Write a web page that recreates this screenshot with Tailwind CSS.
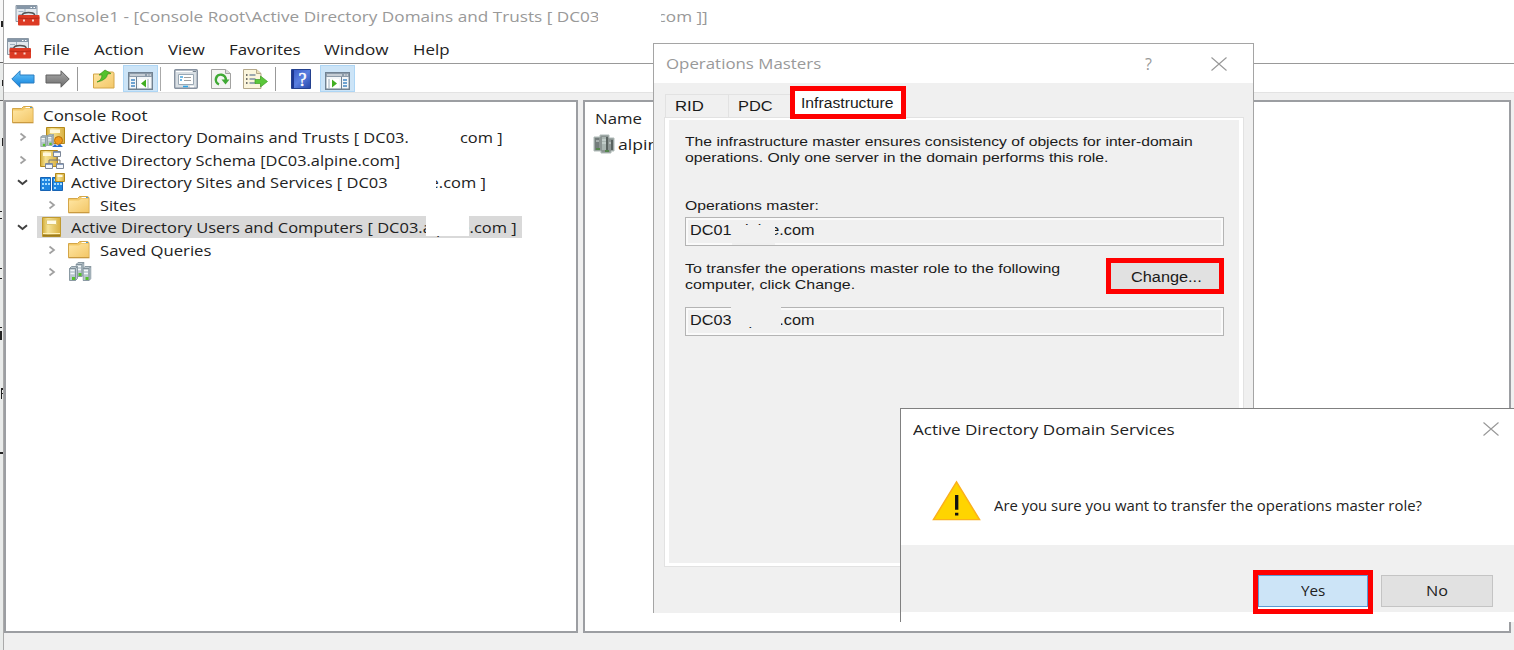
<!DOCTYPE html>
<html lang="en">
<head>
    <meta charset="UTF-8"/>
    <meta content="width=device-width, initial-scale=1.0" name="viewport"/>
    <script src="https://cdn.jsdelivr.net/npm/@tailwindcss/browser@4"></script>
    <title>Console1</title>
</head>
<body class="bg-[#f0f0f0] overflow-hidden">
<!-- shared icons -->
<svg class="absolute w-0 h-0">
    <defs>
        <linearGradient id="gold" x1="0" y1="0" x2="1" y2="1"><stop offset="0" stop-color="#ffe6a3"/><stop offset="1" stop-color="#f3c768"/></linearGradient>
        <linearGradient id="book" x1="0" y1="0" x2="1" y2="0"><stop offset="0" stop-color="#d3ad3a"/><stop offset=".3" stop-color="#f5e295"/><stop offset="1" stop-color="#d9b040"/></linearGradient>
        <linearGradient id="blue" x1="0" y1="0" x2="0" y2="1"><stop offset="0" stop-color="#6cc8fb"/><stop offset="1" stop-color="#0c7fdc"/></linearGradient>
        <linearGradient id="gray" x1="0" y1="0" x2="0" y2="1"><stop offset="0" stop-color="#aaa"/><stop offset="1" stop-color="#6c6c6c"/></linearGradient>
        <linearGradient id="help" x1="0" y1="0" x2="1" y2="1"><stop offset="0" stop-color="#3558c4"/><stop offset=".5" stop-color="#5a7fe0"/><stop offset="1" stop-color="#2444a8"/></linearGradient>
        <symbol id="mmc" viewBox="0 0 24 21">
            <path d="M.5.5h21v16H.5z" fill="#e3e9ee" stroke="#8b98a5"/>
            <path d="M1 1h20v3H1z" fill="#8697a8"/>
            <path d="M15 2.5h1.500M18 2.500h1.500" stroke="#fff"/>
            <path d="M3 6.500h5M3 9.500h4M3 12.500h2M9.500 4v5" stroke="#9fb0c0"/>
            <path d="M7 10.500V9.500Q8 7.500 13 7.500T19 9.500V10.500" fill="none" stroke="#555" stroke-width="1.600"/>
            <rect x="2.500" y="10" width="21.500" height="10.500" rx="1" fill="#dc3a24"/>
            <path d="M2.500 13q10.500 1.500 21.500 0" stroke="#b92a18" fill="none"/>
            <path d="M7.500 14.500h2v2h-2zM16.500 14.500h2v2h-2z" fill="#f8d8d0"/>
        </symbol>
        <symbol id="folder" viewBox="0 0 22 18">
            <path d="M.5 16.500V2.500h9l2-2h7.500q2 0 2 2v14z" fill="#f3c968" stroke="#d4a648"/>
            <path d="M1 4.500h10l2-1.500h7.500v13H1z" fill="url(#gold)"/>
            <path d="M13.500 1.500h5" stroke="#fff"/><path d="M18 1.500h2" stroke="#4b9be0"/>
            <path d="M.5 16.800h21" stroke="#c6963e"/>
        </symbol>
        <symbol id="aduc" viewBox="0 0 19 20">
            <path d="M.5.500h18v19H.5z" fill="url(#book)" stroke="#c09a30"/>
            <path d="M4.500 3h10v4.500h-10z" fill="#fffbe8" stroke="#e0c870"/>
            <path d="M1 16.500h17" stroke="#fff0b4"/><path d="M1 18.500h17" stroke="#9d7b1c" stroke-width="2"/>
        </symbol>
        <symbol id="server" viewBox="0 0 9 15">
            <path d="M.5 2.500l2-2h6v12l-2 2h-6z" fill="#b9c6cd" stroke="#8b9aa3"/>
            <path d="M.5 2.500h6v12M6.500 2.500l2-2" fill="none" stroke="#80909a"/>
            <path d="M1.500 4.500h4M1.500 7.500h4" stroke="#f4f8fa" stroke-width="1.500"/>
            <path d="M3 11h3v3H3z" fill="#55c22b"/>
        </symbol>
        <symbol id="domain" viewBox="0 0 24 20">
            <use href="#server" x="7.500" y="0" width="9" height="15"/>
            <use href="#server" x="1" y="4" width="9" height="15"/>
            <use href="#server" x="14.500" y="4" width="9" height="15"/>
        </symbol>
        <symbol id="more" viewBox="0 0 8 10"><path d="M1.500 1.500L6 5 1.500 8.500" fill="none" stroke="#a0a0a0" stroke-width="1.700"/></symbol>
        <symbol id="open" viewBox="0 0 11 7"><path d="M1 1.200L5.500 5 10 1.200" fill="none" stroke="#404040" stroke-width="2"/></symbol>
        <symbol id="close" viewBox="0 0 16 14"><path d="M.5.500l15 13M15.500.500l-15 13" fill="none" stroke="#989898" stroke-width="1.100"/></symbol>
    </defs>
</svg>

<div class="relative flex w-[1514px] h-[650px] overflow-hidden font-['Open_Sans','Noto_Sans',sans-serif] text-[15px] text-[#222] whitespace-nowrap [&_span]:shrink-0 [&_span]:origin-left">
    <!-- edge of the window behind -->
    <div class="w-[3px] shrink-0 overflow-hidden bg-[#e9ebea]">
        <svg class="block" width="3" height="650" fill="#222">
            <path d="M0 0h3v62H0z" fill="#f8f8f8"/>
            <path d="M0 62h3v1H0zM0 100h3v1H0z" fill="#666"/>
            <path d="M1 21h2v6H1zM2 80h1v6H2zM2 138h1v8H2zM0 211h2v1H0zM0 218h2v1H0zM0 268h2v1H0zM0 278h2v1H0zM0 327h2v1H0zM0 331h2v9H0zM1 388h2v2H2v3h1v1H2v5H1zM0 452h3v2H0z"/>
        </svg>
    </div>

    <div class="flex flex-col flex-1 border-l border-[#aaa]">
        <div class="relative flex items-center h-[33px] pl-[11px] bg-white text-[#999]">
            <svg class="w-[25px] h-[21px] mr-[5px] mb-[2px] shrink-0"><use href="#mmc"/></svg>
            <span data-w="663">Console1 - [Console Root\Active Directory Domains and Trusts [ DC03.alpine.com ]]</span>
            <div class="absolute left-[594px] top-[11px] w-[63px] h-[19px] bg-white"></div>
        </div>
        <div class="flex items-center h-[30px] pl-[3px] bg-white">
            <svg class="w-6 h-[21px] mr-3 shrink-0"><use href="#mmc"/></svg>
            <div class="flex gap-6 pt-[3px]">
                <span data-w="27">File</span>
                <span data-w="50">Action</span>
                <span data-w="37">View</span>
                <span data-w="71">Favorites</span>
                <span data-w="65">Window</span>
                <span data-w="36">Help</span>
            </div>
        </div>
        <div class="flex items-center h-[29px] pt-px pl-[7px] bg-white border-t border-[#999]">
            <svg class="w-6 h-[18px]" viewBox="0 0 24 18"><path d="M.8 9L9 .800V5h14v8H9v4.200z" fill="url(#blue)" stroke="#2b7cc0"/></svg>
            <svg class="w-[25px] h-[18px] ml-[10px]" viewBox="0 0 25 18"><path d="M24.200 9L16 .800V5H1v8h15v4.200z" fill="url(#gray)" stroke="#606060"/></svg>
            <div class="w-px h-6 ml-[7px] bg-[#999]"></div>
            <svg class="w-[22px] h-5 ml-[15px]" viewBox="0 0 22 20">
                <path d="M.5 19V5h8l2-2h9q1.500 0 1.500 1.500V19z" fill="url(#gold)" stroke="#d4a648"/>
                <path d="M4 13Q9 11 9 6H6l6-5 6 3.500-3.500.500Q14 11 4 13z" fill="#54c22e" stroke="#33941a" stroke-width=".7"/>
            </svg>
            <div class="flex items-center justify-center w-[35px] h-[27px] ml-2 bg-[#cce4f7] border border-[#aed6f5]">
                <svg class="w-[25px] h-[18px] mt-1" viewBox="0 0 25 18">
                    <path d="M.7.700h23.600v16.600H.7z" fill="#f4f7f9" stroke="#718292" stroke-width="1.400"/>
                    <path d="M1 1h23v4H1z" fill="#8c9ba9"/><path d="M2 3h15M19 3h1.500M21.500 3H23" stroke="#fff"/>
                    <path d="M8.500 5v12" stroke="#718292"/>
                    <path d="M3 8h4M3 11h4M3 14h4" stroke="#4388c4" stroke-width="1.500"/>
                    <path d="M11 7h11v9H11z" fill="#fff"/><path d="M18 7.500v8L13 11.500z" fill="#42af22"/><path d="M20 7v9" stroke="#99aab8"/>
                </svg>
            </div>
            <div class="w-px h-6 ml-[2px] bg-[#aaa]"></div>
            <svg class="w-6 h-5 ml-[13px]" viewBox="0 0 24 20">
                <rect x=".7" y=".7" width="22.600" height="18.600" rx="1" fill="#d9dfe4" stroke="#8792a0" stroke-width="1.400"/>
                <path d="M2 2.500h16" stroke="#fff"/><path d="M19 2.500h3" stroke="#76838f"/>
                <path d="M4.500 5.500h15v10h-15z" fill="#fff" stroke="#9aa8b4"/>
                <path d="M6 8h3M6 11h2" stroke="#48a4dd" stroke-width="1.500"/><path d="M10 8.500h7M10 11.500h7" stroke="#a0a0a0"/>
                <path d="M9 17.500h5" stroke="#2ba4e8" stroke-width="1.500"/><path d="M16 17.500h4" stroke="#fff" stroke-width="1.500"/>
            </svg>
            <svg class="w-5 h-5 ml-[13px]" viewBox="0 0 20 20">
                <path d="M.5.500h14l5 4v15H.5z" fill="#f4f4f2" stroke="#a2a2a0"/><path d="M14.500.500v4h5" fill="#ddd" stroke="#a2a2a0"/>
                <path d="M8 15.300A5 5 0 1 1 14.800 11" fill="none" stroke="#3fa934" stroke-width="2.500"/><path d="M10.500 10.500h8l-4 5z" fill="#3fa934"/>
            </svg>
            <svg class="w-[25px] h-5 ml-3" viewBox="0 0 25 20">
                <path d="M.5.500h13l4.500 4v15H.5z" fill="#fbf5dc" stroke="#b5a98b"/><path d="M13.500.500v4H18" fill="#eadfba" stroke="#b5a98b"/>
                <path d="M3 6h1.500M3 10h1.500M3 14h1.500" stroke="#444" stroke-width="1.500"/><path d="M6.500 6h6M6.500 10h6M6.500 14h6" stroke="#7f8fa0" stroke-width="1.500"/>
                <path d="M12 10.500h5.500V7l7 5.500-7 5.500v-3.500H12z" fill="#5bc73a" stroke="#3e9e22" stroke-width=".7"/>
            </svg>
            <div class="w-px h-6 ml-[7px] bg-[#999]"></div>
            <svg class="w-5 h-5 ml-[15px]" viewBox="0 0 20 20">
                <path d="M.5.500h19v19H.5z" fill="url(#help)" stroke="#24418f"/><path d="M2 1v18" stroke="#1c3690" stroke-width="2"/>
                <text x="11.500" y="16.500" text-anchor="middle" font-size="18" font-family="Liberation Serif" fill="#fff" stroke="#fff" stroke-width=".4">?</text>
            </svg>
            <div class="flex items-center justify-center w-[35px] h-[27px] ml-[9px] bg-[#cce4f7] border border-[#aed6f5]">
                <svg class="w-[25px] h-[18px] mt-1" viewBox="0 0 25 18">
                    <path d="M.7.700h23.600v16.600H.7z" fill="#f4f7f9" stroke="#718292" stroke-width="1.400"/>
                    <path d="M1 1h23v4H1z" fill="#8c9ba9"/><path d="M2 3h15M19 3h1.500M21.500 3H23" stroke="#fff"/>
                    <path d="M16.500 5v12" stroke="#718292"/>
                    <path d="M18 8h4M18 11h4M18 14h4" stroke="#4388c4" stroke-width="1.500"/>
                    <path d="M2 7h12v9H2z" fill="#fff"/><path d="M7 7.500v8l5-4z" fill="#42af22"/><path d="M4 7v9" stroke="#99aab8"/>
                </svg>
            </div>
        </div>

        <div class="flex gap-[5px] pt-[7px] pr-[3px] h-[541px] bg-[#f0f0f0] border-t border-[#e3e3e3]">
            <!-- console tree -->
            <div class="w-[574px] shrink-0 pt-[1.5px] bg-white border-2 border-[#9c9ea2]">
                <div class="flex items-center h-[22.5px] pl-[6px]">
                    <svg class="w-[22px] h-[18px] mr-[9px] shrink-0"><use href="#folder"/></svg>
                    <span data-w="105">Console Root</span>
                </div>
                <div class="relative flex items-center h-[22.5px] pl-[13px]">
                    <svg class="w-2 h-[10px] mr-[13px] shrink-0"><use href="#more"/></svg>
                    <svg class="w-[25px] h-[21px] mr-[6px] shrink-0" viewBox="0 0 25 21">
                        <path d="M6.500.500h18v16h-18z" fill="url(#book)" stroke="#b48a1c"/><path d="M10 2.500h10V6H10z" fill="#fff8dc"/>
                        <use href="#server" x="7" y="7" width="7" height="12"/><use href="#server" x="0" y="8" width="8" height="12"/>
                        <circle cx="18.500" cy="13.500" r="4" fill="#f09a1c" stroke="#b86c08"/><path d="M12 20l3-3 2 2 3-2 3 3z" fill="#2a6ed0"/>
                    </svg>
                    <span data-w="432">Active Directory Domains and Trusts [ DC03.alpine.com ]</span>
                    <div class="absolute left-[402px] top-0 w-[52px] h-[22px] bg-white"></div>
                </div>
                <div class="flex items-center h-[22.5px] pl-[13px]">
                    <svg class="w-2 h-[10px] mr-[13px] shrink-0"><use href="#more"/></svg>
                    <svg class="w-[25px] h-[20px] mr-[6px] shrink-0" viewBox="0 0 25 20">
                        <path d="M.5.500h17v16H.5z" fill="url(#book)" stroke="#b48a1c"/><path d="M3 2.500h8V6H3z" fill="#fff8dc"/>
                        <path d="M17 6v5M9 13v-3h11v3" fill="none" stroke="#777"/>
                        <path d="M13.500 1.500h7v5h-7zM5.500 13.500h7v5h-7zM16.500 13.500h7v5h-7z" fill="#f5f7fb" stroke="#7c8798"/>
                        <path d="M14 2.500h6M6 14.500h6M17 14.500h6" stroke="#8aa0c0"/>
                    </svg>
                    <span data-w="329">Active Directory Schema [DC03.alpine.com]</span>
                </div>
                <div class="relative flex items-center h-[22.5px] pl-[11px]">
                    <svg class="w-[11px] h-[7px] mr-[12px] shrink-0"><use href="#open"/></svg>
                    <svg class="w-[25px] h-[20px] mr-[6px] shrink-0" viewBox="0 0 25 20">
                        <path d="M.5 5.500h10v13H.5zM12.500 5.500h10v13h-10z" fill="#1e86e0" stroke="#1763b4"/>
                        <path d="M2 8h8M2 12h8M2 16h3M14 8h8M14 12h8M14 16h3" stroke="#a5dcff" stroke-width="2" stroke-dasharray="2 1"/>
                        <path d="M15.500 1.500h9v8h-9z" fill="url(#book)" stroke="#b48a1c"/><path d="M17.500 3h5v2h-5z" fill="#fff8dc"/>
                    </svg>
                    <span data-w="415">Active Directory Sites and Services [ DC03.alpine.com ]</span>
                    <div class="absolute left-[382px] top-0 w-[48px] h-[22px] bg-white"></div>
                </div>
                <div class="flex items-center h-[22.5px] pl-[42px]">
                    <svg class="w-2 h-[10px] mr-3 shrink-0"><use href="#more"/></svg>
                    <svg class="w-[22px] h-[18px] mr-[10px] shrink-0"><use href="#folder"/></svg>
                    <span data-w="36">Sites</span>
                </div>
                <div class="relative flex items-center h-[22.5px] pl-[11px]">
                    <svg class="w-[11px] h-[7px] mr-[9px] shrink-0"><use href="#open"/></svg>
                    <div class="flex items-center w-[485px] h-[22px] pl-[5px] bg-[#d9d9d9]">
                        <svg class="w-[19px] h-[20px] mr-[10px] shrink-0"><use href="#aduc"/></svg>
                        <span data-w="446">Active Directory Users and Computers [ DC03.alpine.com ]</span>
                    </div>
                    <div class="absolute left-[420px] top-0 w-[43px] h-[20px] bg-white"></div>
                </div>
                <div class="flex items-center h-[22.5px] pl-[42px]">
                    <svg class="w-2 h-[10px] mr-3 shrink-0"><use href="#more"/></svg>
                    <svg class="w-[22px] h-[18px] mr-[10px] shrink-0"><use href="#folder"/></svg>
                    <span data-w="111">Saved Queries</span>
                </div>
                <div class="flex items-center h-[22.5px] pl-[42px]">
                    <svg class="w-2 h-[10px] mr-3 shrink-0"><use href="#more"/></svg>
                    <svg class="w-6 h-5 shrink-0"><use href="#domain"/></svg>
                </div>
            </div>
            <!-- result list, runs on under the dialog -->
            <div class="flex-1 pt-[5px] pl-[10px] bg-white border-2 border-[#9c9ea2]">
                <div class="flex items-center h-[22px]"><span data-w="47">Name</span></div>
                <div class="flex items-center h-[30px] -ml-[2px]">
                    <svg class="w-[22px] h-5 mr-[3px] shrink-0" viewBox="0 0 22 20">
                        <path d="M1 3h6V1h9v3h5v13h-3v2H8v-2H1z" fill="#8b9492" stroke="#b0bbb8"/>
                        <path d="M2 4h4v12H2z" fill="#747d7c"/><path d="M9 3h4v13H9z" fill="#a9b5b1"/><path d="M13 3h2v14h-2zM18 6h2v10h-2z" fill="#59625f"/>
                        <path d="M9 6h4M9 9h4M16 9h2M3 7h3" stroke="#d8e2df"/><path d="M3 15h4M12 17h4" stroke="#55864e" stroke-width="2"/>
                    </svg>
                    <span data-w="40">alpin</span>
                </div>
            </div>
        </div>
    </div>

    <!-- Operations Masters -->
    <div class="absolute left-[653px] top-[43px] flex flex-col w-[601px] h-[570px] bg-[#f0f0f0] border border-b-0 border-[#a5a5a5]">
        <div class="flex items-center h-[39px] pl-[12px] pr-[26px] bg-white text-[#999]">
            <span data-w="155">Operations Masters</span>
            <span class="ml-auto mr-[59px] text-[16px]">?</span>
            <svg class="w-4 h-[14px]"><use href="#close"/></svg>
        </div>
        <div class="flex flex-col flex-1 pt-[11px] px-[10px] font-['Liberation_Sans',Arial,sans-serif] text-[13.5px] text-[#1a1a1a]">
            <div class="relative flex h-[23px] pl-px text-[15px]">
                <div class="flex items-center w-[64px] pl-[9px] border border-b-0 border-[#e2e2e2]"><span data-w="29">RID</span></div>
                <div class="flex items-center w-[63px] pl-[9px] border border-l-0 border-b-0 border-[#e2e2e2]"><span data-w="35">PDC</span></div>
                <div class="absolute left-[126px] -top-2 z-10 flex items-center w-[116px] h-[33px] pt-[2px] pl-[6px] bg-white border-5 border-[#f00] text-[14px]"><span data-w="92">Infrastructure</span></div>
            </div>
            <div class="w-[580px] h-[450px] border border-[#e2e2e2] bg-white p-1 pt-[2px] pb-[3px]">
                <div class="h-full pt-[14px] pl-[16px] pr-[15px] bg-[#f0f0f0]">
                    <div class="leading-4">
                        <div class="flex"><span data-w="508">The infrastructure master ensures consistency of objects for inter-domain</span></div>
                        <div class="flex"><span data-w="423">operations. Only one server in the domain performs this role.</span></div>
                    </div>
                    <div class="flex mt-8 leading-4"><span data-w="134">Operations master:</span></div>
                    <div class="relative flex items-center h-[29px] mt-[3px] pl-1 pb-[2px] border border-[#b4b4b4] shadow-[inset_0_0_0_2px_#fafafa] text-[14px]">
                        <span data-w="124">DC01.alpine.com</span>
                        <div class="absolute left-[46px] top-[7px] w-[43px] h-[20px] bg-[#f0f0f0]"></div>
                    </div>
                    <div class="flex justify-between mt-[12px]">
                        <div class="pt-[3px] leading-4">
                            <div class="flex"><span data-w="375">To transfer the operations master role to the following</span></div>
                            <div class="flex"><span data-w="170">computer, click Change.</span></div>
                        </div>
                        <button class="flex items-center justify-center w-[118px] h-[36px] pt-[2px] pl-[3px] border-5 border-[#f00] bg-[#e1e1e1] text-[14px]"><span data-w="71">Change...</span></button>
                    </div>
                    <div class="relative flex items-center h-[29px] mt-[13px] pl-1 pb-[2px] border border-[#b4b4b4] shadow-[inset_0_0_0_2px_#fafafa] text-[14px]">
                        <span data-w="124">DC03.alpine.com</span>
                        <div class="absolute left-[45px] -top-px w-[50px] h-[20px] bg-[#f0f0f0]"></div>
                    </div>
                </div>
            </div>
        </div>
    </div>

    <!-- Confirmation -->
    <div class="absolute left-[900px] top-[408px] flex flex-col w-[614px] h-[214px] bg-white border-l border-t border-[#808080] text-[#222]">
        <div class="flex items-center justify-between h-[40px] pl-[12px] pr-[15px]">
            <span data-w="262">Active Directory Domain Services</span>
            <svg class="w-4 h-[14px]"><use href="#close"/></svg>
        </div>
        <div class="flex items-center h-[96px] pl-[31px] pb-px text-[14px]">
            <svg class="w-[49px] h-[41px] mr-[13px] mt-[7px] shrink-0" viewBox="0 0 50 41">
                <path d="M25 1.500L48.500 40h-47z" fill="#ffd400" stroke="#fbb01c" stroke-width="1.500"/>
                <path d="M23.500 15h3.400v15h-3.400zM23.500 33h3.400v2.800h-3.400z" fill="#111"/>
            </svg>
            <span class="mt-[18px]" data-w="428">Are you sure you want to transfer the operations master role?</span>
        </div>
        <div class="flex justify-end gap-2 h-[67px] pt-[25px] pr-[21px] bg-[#f0f0f0] text-[14px]">
            <div class="shrink-0 w-[120px] h-[44px] border-5 border-[#f00] bg-white">
                <button class="flex items-center justify-center w-full h-[32px] pb-px border border-[#5a9bd5] bg-[#cce4f7]"><span data-w="24">Yes</span></button>
            </div>
            <button class="flex items-center justify-center w-[112px] h-[32px] mt-[5px] pr-px pb-px border border-[#c4c4c4] bg-[#e1e1e1]"><span data-w="22">No</span></button>
        </div>
    </div>
</div>

<script>
    // stretch every label to the width given in data-w
    const fit = (e) => {
        const w = Number(e.dataset.w);
        e.style.transform = `scaleX(${w / e.offsetWidth})`;
        e.style.marginRight = `${w - e.offsetWidth}px`;
    }

    const observer = new ResizeObserver((entries) => entries.forEach((x) => fit(x.target)));
    document.querySelectorAll("[data-w]").forEach((e) => {
        fit(e);
        observer.observe(e);
    })
</script>
</body>
</html>
